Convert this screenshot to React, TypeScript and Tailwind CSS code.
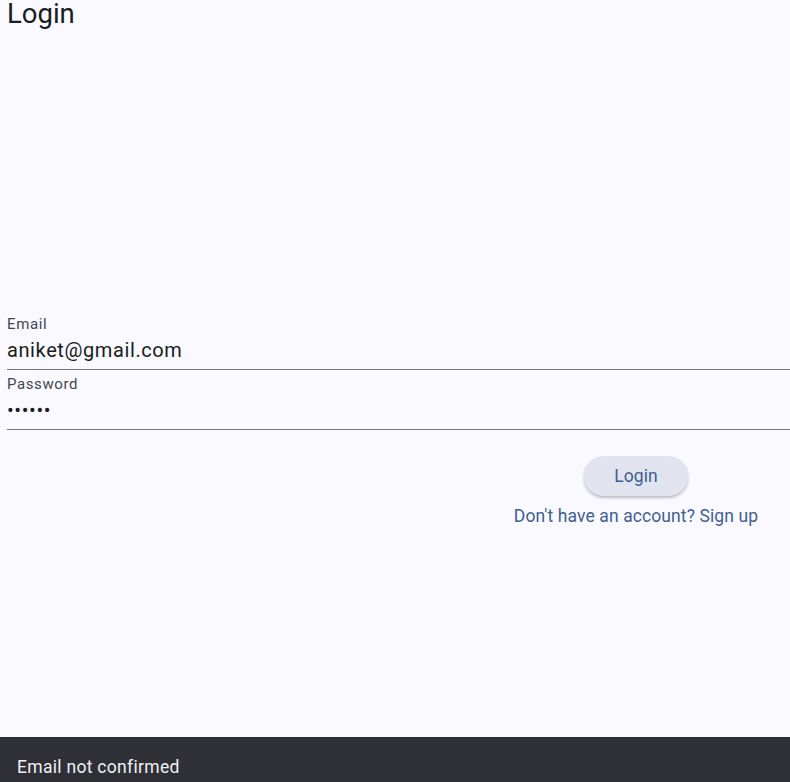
import React from "react";

const LoginPage: React.FC = () => {
  return (
    <div className="relative flex h-screen w-full flex-col overflow-hidden bg-[#f9f9ff] font-['Roboto',sans-serif] text-[#191c20]">
      {/* Titre */}
      <h1 className="pl-[7px] text-[27.5px] font-normal leading-[30px] -mt-[1px]">Login</h1>

      {/* Formulaire */}
      <div className="mt-[285px] flex flex-col pl-[7px]">
        <div className="flex flex-col border-b border-[#74777f] pb-[5px]">
          <label className="text-[15px] leading-[20px] tracking-[0.6px] text-[#44474e]">
            Email
          </label>
          <div className="mt-[2px] text-[20px] leading-[28px] tracking-[0.6px]">
            aniket@gmail.com
          </div>
        </div>
        <div className="mt-[4px] flex flex-col border-b border-[#74777f] pb-[5px]">
          <label className="text-[15px] leading-[20px] tracking-[0.6px] text-[#44474e]">
            Password
          </label>
          <div className="mt-[2px] text-[20px] leading-[28px] tracking-[0.6px]">
            ••••••
          </div>
        </div>
      </div>

      {/* Boutons */}
      <div className="mr-[20px] mt-[26px] flex w-[268px] flex-col items-center self-end">
        <button className="h-[40px] w-[104px] rounded-full bg-[#e1e4ee] text-[17.5px] tracking-[0.1px] text-[#415f91] shadow-[0_2px_3px_rgba(0,0,0,0.25)]">
          Login
        </button>
        <button className="mt-[8px] text-[17.5px] leading-[24px] tracking-[0.1px] text-[#415f91]">
          Don't have an account? Sign up
        </button>
      </div>

      {/* Snackbar */}
      <div className="absolute left-0 right-0 top-[737px] h-[60px] bg-[#2e3036] px-[17px] pt-[18px]">
        <span className="text-[17.5px] leading-[25px] tracking-[0.3px] text-[#eff0f7]">
          Email not confirmed
        </span>
      </div>
    </div>
  );
};

export default function App() {
  return <LoginPage />;
}
